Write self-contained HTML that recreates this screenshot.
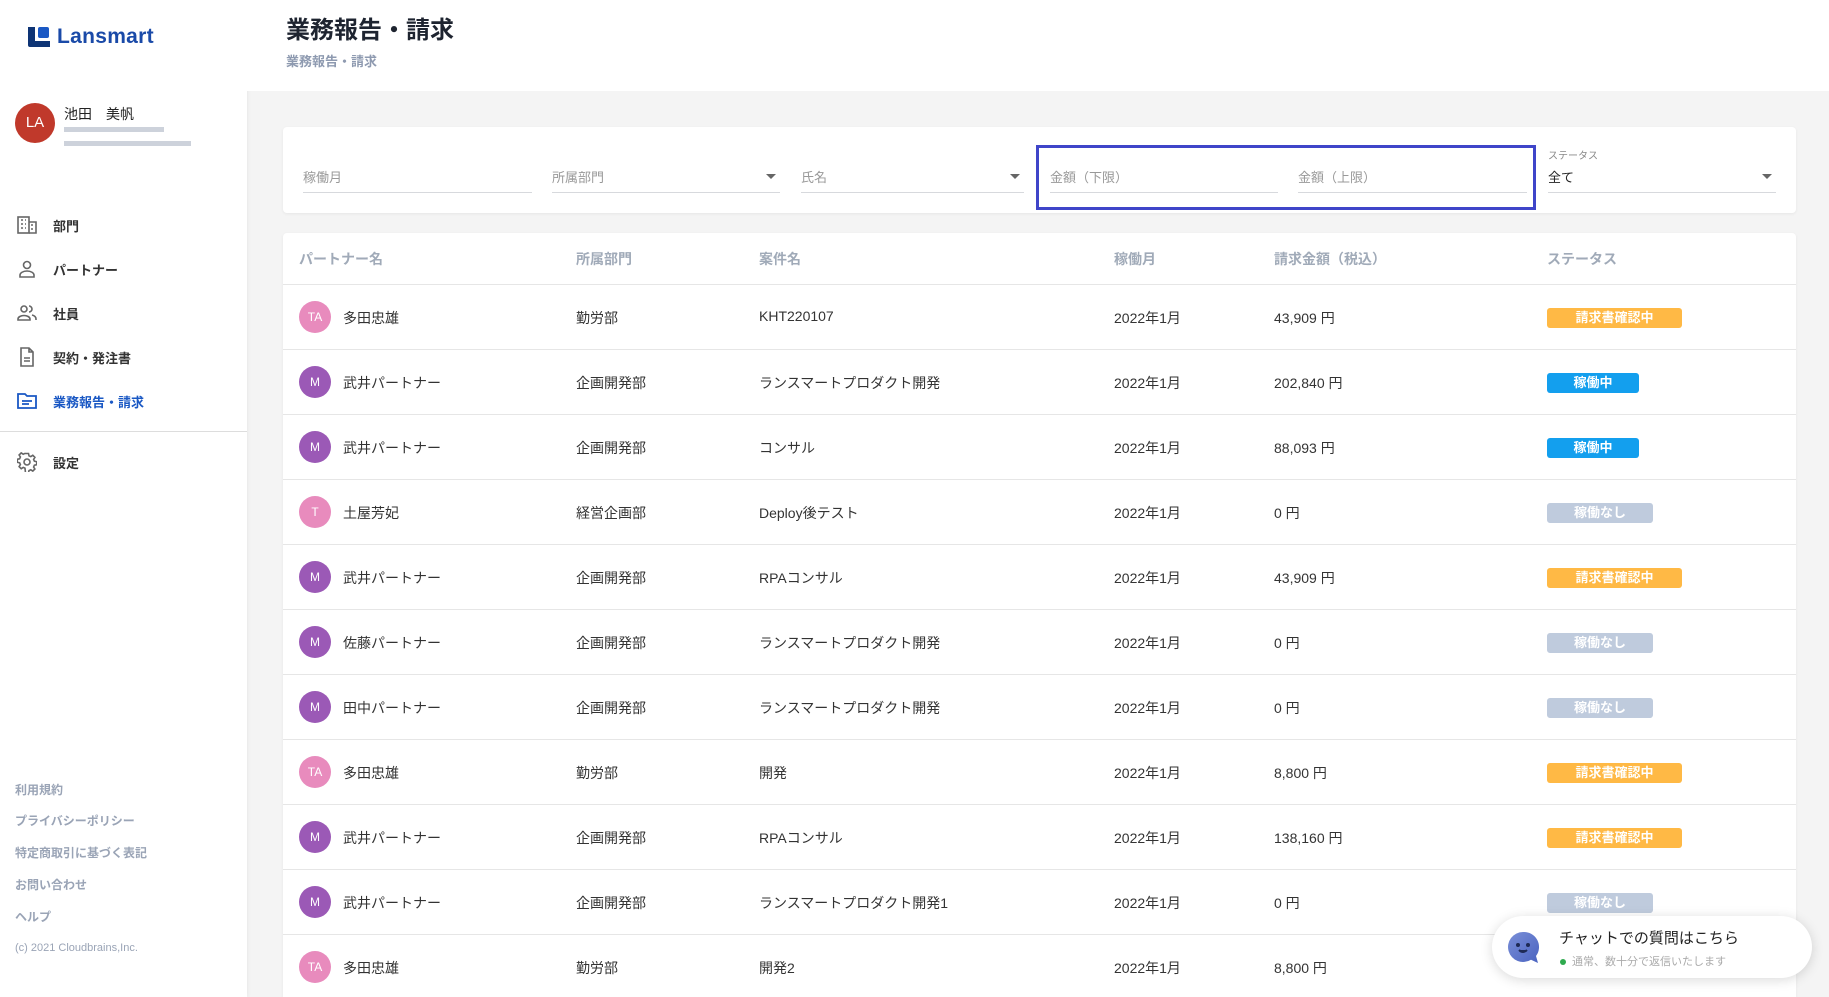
<!DOCTYPE html>
<html><head><meta charset="utf-8"><style>
*{box-sizing:border-box;margin:0;padding:0}
html,body{width:1829px;height:997px;overflow:hidden}
body{background:#f4f4f4;font-family:"Liberation Sans","Noto Sans CJK JP",sans-serif;color:#333;position:relative}
.side{position:absolute;left:0;top:0;width:247px;height:997px;background:#fff;box-shadow:1px 0 4px rgba(0,0,0,.05)}
.abs{position:absolute}
.nav{position:absolute;left:17px;display:flex;align-items:center;font-size:13px;color:#333;font-weight:bold}
.nav svg{margin-right:16px}
.foot{position:absolute;left:15px;font-size:12px;color:#9aa4b6;font-weight:bold}
.header{position:absolute;left:247px;top:0;width:1582px;height:91px;background:#fff}
.card{position:absolute;left:283px;width:1513px;background:#fff;border-radius:4px;box-shadow:0 1px 3px rgba(0,0,0,.06);overflow:hidden}
.fld{position:absolute;height:38px;border-bottom:1px solid #d7d9dd;font-size:13px;color:#999;padding-top:12px}
.arrow{position:absolute;right:4px;top:19px;width:0;height:0;border-left:5px solid transparent;border-right:5px solid transparent;border-top:5px solid #666}
.row{position:absolute;left:0;width:1513px;height:65px;border-top:1px solid #e6e6e6;font-size:14px;color:#333}
.row span{position:absolute;top:23px}
.av{position:absolute;left:16px;top:16px;width:32px;height:32px;border-radius:50%;color:#fff;font-size:12px;text-align:center;line-height:32px}
.bd{position:absolute;top:23px;height:20px;border-radius:3px;color:#fff;font-size:13px;font-weight:bold;text-align:center;line-height:20px}
.hd{position:absolute;top:16px;font-size:14px;color:#a0aab8;font-weight:bold}
</style></head><body>
<div class="side">
  <div class="abs" style="left:27px;top:25px;display:flex;align-items:center">
    <svg width="24" height="24" viewBox="0 0 24 24"><path d="M1 2h7v14h15v6H3a2 2 0 0 1-2-2z" fill="#0e3475"/><rect x="11" y="2" width="11" height="11" rx="2" fill="#1a58c4"/></svg>
    <span style="font-size:21px;font-weight:bold;color:#1a4aa8;margin-left:6px;letter-spacing:.3px">Lansmart</span>
  </div>
  <div class="abs" style="left:15px;top:103px;width:40px;height:40px;border-radius:50%;background:#c0392b;color:#fff;font-size:15px;text-align:center;line-height:40px">LA</div>
  <div class="abs" style="left:64px;top:104px;font-size:14px;color:#222">池田　美帆</div>
  <div class="abs" style="left:64px;top:127px;width:100px;height:5px;background:#b8bfcc;opacity:.7"></div>
  <div class="abs" style="left:64px;top:141px;width:127px;height:5px;background:#b8bfcc;opacity:.7"></div>
  <div class="nav" style="top:215px"><svg width="20" height="20" viewBox="0 0 20 20" fill="none" stroke="#666" stroke-width="1.6"><rect x="1" y="2" width="11" height="16"/><path d="M12 7h7v11h-7M4 5h2M8 5h1M4 9h2M8 9h1M4 13h2M8 13h1M14 10h2M14 14h2"/></svg>部門</div>
  <div class="nav" style="top:259px"><svg width="20" height="20" viewBox="0 0 20 20" fill="none" stroke="#666" stroke-width="1.6"><circle cx="10" cy="6" r="3.5"/><path d="M3 18v-2c0-2 3-4 7-4s7 2 7 4v2z"/></svg>パートナー</div>
  <div class="nav" style="top:303px"><svg width="20" height="20" viewBox="0 0 20 20" fill="none" stroke="#666" stroke-width="1.6"><circle cx="7" cy="6" r="3"/><path d="M1 17v-1c0-2 3-3.5 6-3.5s6 1.5 6 3.5v1zM12 3a3 3 0 0 1 0 6M15 12c2 .5 4 1.5 4 4v1"/></svg>社員</div>
  <div class="nav" style="top:347px"><svg width="20" height="20" viewBox="0 0 20 20" fill="none" stroke="#666" stroke-width="1.6"><path d="M4 1h8l4 4v14H4zM12 1v4h4M7 11h6M7 14h6"/></svg>契約・発注書</div>
  <div class="nav" style="top:391px;color:#1a58c4"><svg width="20" height="20" viewBox="0 0 20 20" fill="none" stroke="#1a58c4" stroke-width="1.8"><path d="M1 3h7l2 2h9v12H1zM5 10h10M5 13h7"/></svg>業務報告・請求</div>
  <div class="abs" style="left:0;top:431px;width:247px;height:1px;background:#ddd"></div>
  <div class="nav" style="top:452px"><svg width="20" height="20" viewBox="0 0 20 20" fill="none" stroke="#666" stroke-width="1.6"><circle cx="10" cy="10" r="3"/><path d="M8.5 1.5h3l.5 2.3 1.8.8 2-1.3 2.1 2.1-1.3 2 .8 1.8 2.3.5v3l-2.3.5-.8 1.8 1.3 2-2.1 2.1-2-1.3-1.8.8-.5 2.3h-3L8 16.2l-1.8-.8-2 1.3-2.1-2.1 1.3-2-.8-1.8-2.3-.5v-3l2.3-.5.8-1.8-1.3-2 2.1-2.1 2 1.3 1.8-.8z"/></svg>設定</div>
  <div class="foot" style="top:781px">利用規約</div>
  <div class="foot" style="top:812px">プライバシーポリシー</div>
  <div class="foot" style="top:844px">特定商取引に基づく表記</div>
  <div class="foot" style="top:876px">お問い合わせ</div>
  <div class="foot" style="top:908px">ヘルプ</div>
  <div class="foot" style="top:942px;font-weight:normal;font-size:11px">(c) 2021 Cloudbrains,Inc.</div>
</div>
<div class="header">
  <div class="abs" style="left:39px;top:10px;font-size:24px;font-weight:bold;color:#1e2430">業務報告・請求</div>
  <div class="abs" style="left:39px;top:51px;font-size:13px;font-weight:bold;color:#8e9ab0">業務報告・請求</div>
</div>
<div class="card" style="top:127px;height:86px">
  <div class="fld" style="left:20px;width:229px;top:28px">稼働月</div>
  <div class="fld" style="left:269px;width:228px;top:28px">所属部門<div class="arrow"></div></div>
  <div class="fld" style="left:518px;width:223px;top:28px">氏名<div class="arrow"></div></div>
  <div class="abs" style="left:753px;top:18px;width:500px;height:65px;border:3px solid #3f45c9"></div>
  <div class="fld" style="left:767px;width:228px;top:28px">金額（下限）</div>
  <div class="fld" style="left:1015px;width:229px;top:28px">金額（上限）</div>
  <div class="abs" style="left:1265px;top:20px;font-size:10px;color:#888">ステータス</div>
  <div class="fld" style="left:1265px;width:228px;top:28px;color:#222">全て<div class="arrow"></div></div>
</div>
<div class="card" style="top:233px;height:764px;border-radius:4px 4px 0 0">
  <div class="hd" style="left:16px">パートナー名</div>
  <div class="hd" style="left:293px">所属部門</div>
  <div class="hd" style="left:476px">案件名</div>
  <div class="hd" style="left:831px">稼働月</div>
  <div class="hd" style="left:991px">請求金額（税込）</div>
  <div class="hd" style="left:1264px">ステータス</div>
  <div class="row" style="top:51px"><div class="av" style="background:#e88bbd">TA</div><span style="left:60px">多田忠雄</span><span style="left:293px">勤労部</span><span style="left:476px">KHT220107</span><span style="left:831px">2022年1月</span><span style="left:991px">43,909 円</span><div class="bd" style="left:1264px;width:135px;background:#ffb945">請求書確認中</div></div>
  <div class="row" style="top:116px"><div class="av" style="background:#9b59b6">M</div><span style="left:60px">武井パートナー</span><span style="left:293px">企画開発部</span><span style="left:476px">ランスマートプロダクト開発</span><span style="left:831px">2022年1月</span><span style="left:991px">202,840 円</span><div class="bd" style="left:1264px;width:92px;background:#139fee">稼働中</div></div>
  <div class="row" style="top:181px"><div class="av" style="background:#9b59b6">M</div><span style="left:60px">武井パートナー</span><span style="left:293px">企画開発部</span><span style="left:476px">コンサル</span><span style="left:831px">2022年1月</span><span style="left:991px">88,093 円</span><div class="bd" style="left:1264px;width:92px;background:#139fee">稼働中</div></div>
  <div class="row" style="top:246px"><div class="av" style="background:#e88bbd">T</div><span style="left:60px">土屋芳妃</span><span style="left:293px">経営企画部</span><span style="left:476px">Deploy後テスト</span><span style="left:831px">2022年1月</span><span style="left:991px">0 円</span><div class="bd" style="left:1264px;width:106px;background:#bfcbdd">稼働なし</div></div>
  <div class="row" style="top:311px"><div class="av" style="background:#9b59b6">M</div><span style="left:60px">武井パートナー</span><span style="left:293px">企画開発部</span><span style="left:476px">RPAコンサル</span><span style="left:831px">2022年1月</span><span style="left:991px">43,909 円</span><div class="bd" style="left:1264px;width:135px;background:#ffb945">請求書確認中</div></div>
  <div class="row" style="top:376px"><div class="av" style="background:#9b59b6">M</div><span style="left:60px">佐藤パートナー</span><span style="left:293px">企画開発部</span><span style="left:476px">ランスマートプロダクト開発</span><span style="left:831px">2022年1月</span><span style="left:991px">0 円</span><div class="bd" style="left:1264px;width:106px;background:#bfcbdd">稼働なし</div></div>
  <div class="row" style="top:441px"><div class="av" style="background:#9b59b6">M</div><span style="left:60px">田中パートナー</span><span style="left:293px">企画開発部</span><span style="left:476px">ランスマートプロダクト開発</span><span style="left:831px">2022年1月</span><span style="left:991px">0 円</span><div class="bd" style="left:1264px;width:106px;background:#bfcbdd">稼働なし</div></div>
  <div class="row" style="top:506px"><div class="av" style="background:#e88bbd">TA</div><span style="left:60px">多田忠雄</span><span style="left:293px">勤労部</span><span style="left:476px">開発</span><span style="left:831px">2022年1月</span><span style="left:991px">8,800 円</span><div class="bd" style="left:1264px;width:135px;background:#ffb945">請求書確認中</div></div>
  <div class="row" style="top:571px"><div class="av" style="background:#9b59b6">M</div><span style="left:60px">武井パートナー</span><span style="left:293px">企画開発部</span><span style="left:476px">RPAコンサル</span><span style="left:831px">2022年1月</span><span style="left:991px">138,160 円</span><div class="bd" style="left:1264px;width:135px;background:#ffb945">請求書確認中</div></div>
  <div class="row" style="top:636px"><div class="av" style="background:#9b59b6">M</div><span style="left:60px">武井パートナー</span><span style="left:293px">企画開発部</span><span style="left:476px">ランスマートプロダクト開発1</span><span style="left:831px">2022年1月</span><span style="left:991px">0 円</span><div class="bd" style="left:1264px;width:106px;background:#bfcbdd">稼働なし</div></div>
  <div class="row" style="top:701px"><div class="av" style="background:#e88bbd">TA</div><span style="left:60px">多田忠雄</span><span style="left:293px">勤労部</span><span style="left:476px">開発2</span><span style="left:831px">2022年1月</span><span style="left:991px">8,800 円</span></div>
</div>
<div class="abs" style="left:1492px;top:916px;width:320px;height:62px;background:#fff;border-radius:31px;box-shadow:0 2px 12px rgba(0,0,0,.15)">
  <svg class="abs" style="left:14px;top:14px" width="36" height="36" viewBox="0 0 36 36"><defs><linearGradient id="g" x1="0" y1="0" x2="1" y2="1"><stop offset="0" stop-color="#7a8fd8"/><stop offset="1" stop-color="#4a63c0"/></linearGradient></defs><path d="M17 2a15 15 0 1 0 8 27.7L32 33l-2-7A15 15 0 0 0 17 2z" fill="url(#g)"/><circle cx="12" cy="15" r="2" fill="#1e2a55"/><circle cx="22" cy="15" r="2" fill="#1e2a55"/><path d="M13 20q4 4 8 0" stroke="#1e2a55" stroke-width="2" fill="#1e2a55"/></svg>
  <div class="abs" style="left:67px;top:11px;font-size:15px;color:#222">チャットでの質問はこちら</div>
  <div class="abs" style="left:68px;top:37px;font-size:11px;color:#aaa"><span style="display:inline-block;width:6px;height:6px;border-radius:50%;background:#2eaa4e;margin-right:6px;vertical-align:middle"></span>通常、数十分で返信いたします</div>
</div>
</body></html>
